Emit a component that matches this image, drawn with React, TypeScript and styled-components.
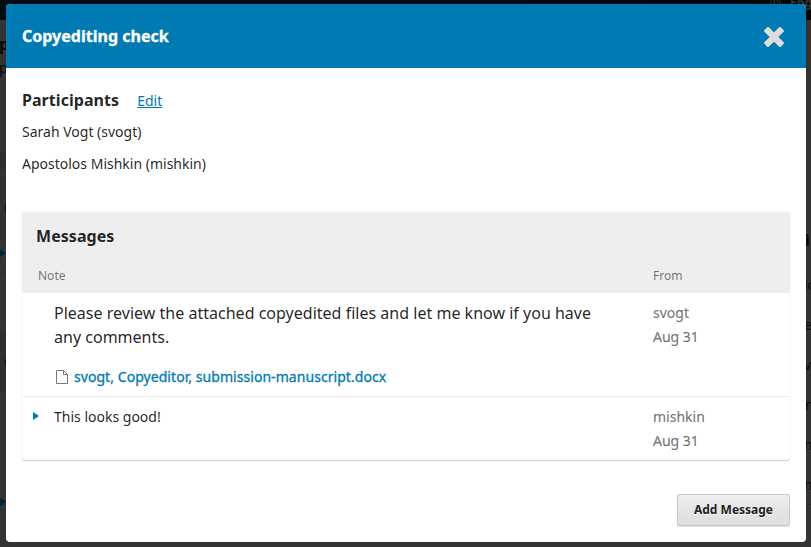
import React from "react";
import styled, { createGlobalStyle } from "styled-components";

const GlobalStyle = createGlobalStyle`
  * { box-sizing: border-box; }
  body { margin: 0; overflow: hidden; background: #333; }
  h2, h3, p, ul { margin: 0; padding: 0; }
  button { font-family: inherit; }
`;

const Page = styled.div`
  position: relative;
  width: 811px;
  height: 547px;
  overflow: hidden;
  background: #333;
  color: rgba(0, 0, 0, 0.87);
  font-family: "Noto Sans", sans-serif;
  font-size: 14px;
  line-height: 24px;
`;

const SiteBar = styled.div`
  display: flex;
  align-items: flex-start;
  justify-content: flex-end;
  height: 20px;
  background: linear-gradient(90deg, #000b12 0, #000b12 50%, #00060a 100%);
  color: #343434;
  font-size: 12px;
  font-weight: 700;
  line-height: 6px;
  white-space: nowrap;
  gap: 9px;
  overflow: hidden;
`;

const GlobeIcon = styled.svg`
  width: 11px;
  height: 11px;
  margin-top: -4px;
`;

const Language = styled.span`
  width: 21px;
`;

const SiteBody = styled.div`
  display: flex;
  justify-content: space-between;
  height: 527px;
`;

const Edge = styled.div`
  width: 6px;
  overflow: hidden;
`;

const Band = styled.div<{ $h: number; $bg?: string; $line?: boolean; $top?: number }>`
  display: flex;
  align-items: center;
  height: ${(p) => p.$h}px;
  padding-top: ${(p) => p.$top || 0}px;
  background: ${(p) => p.$bg || "#333"};
  border-bottom: ${(p) => (p.$line ? "1px solid #292929" : "0")};
`;

const Fragment = styled.span<{ $bold?: boolean; $size?: number; $shift?: number }>`
  margin-left: ${(p) => p.$shift || 0}px;
  color: #080808;
  font-size: ${(p) => p.$size || 14}px;
  font-weight: ${(p) => (p.$bold ? 700 : 400)};
`;

const EdgeArrow = styled.span`
  border-left: 6px solid #00253a;
  border-top: 4px solid transparent;
  border-bottom: 4px solid transparent;
`;

const Modal = styled.section`
  position: absolute;
  left: 6px;
  top: 4px;
  width: 800px;
  height: 538px;
  border-radius: 4px;
  overflow: hidden;
  background: #fff;
`;

const ModalHeader = styled.header`
  display: flex;
  align-items: center;
  justify-content: space-between;
  height: 64px;
  padding: 0 21px 0 16px;
  background: #007ab2;
  color: #fff;
`;

const Title = styled.h2`
  font-size: 16px;
  line-height: 24px;
  font-weight: 700;
  letter-spacing: 0.02px;
  -webkit-text-stroke: 0.3px #fff;
`;

const CloseButton = styled.button`
  display: flex;
  padding: 0;
  border: 0;
  background: none;
  svg { width: 22px; height: 22px; margin-top: 1px; }
`;

const ModalBody = styled.div`
  padding: 20px 16px 16px;
`;

const ParticipantsHead = styled.div`
  display: flex;
  align-items: baseline;
  gap: 18px;
  height: 24px;
`;

const SectionTitle = styled.h3`
  font-size: 16px;
  line-height: 24px;
  font-weight: 700;
  letter-spacing: 0.05px;
`;

const EditLink = styled.a`
  color: #007ab2;
  text-decoration: underline;
`;

const People = styled.ul`
  list-style: none;
  padding-top: 4px;
  li { height: 32px; line-height: 32px; }
`;

const Grid = styled.div`
  margin-top: 32px;
  height: 248px;
  border-radius: 3px;
  box-shadow: 0 0 1px rgba(0, 0, 0, 0.18), 0 1px 1px rgba(0, 0, 0, 0.18);
  overflow: hidden;
`;

const GridHeader = styled.div`
  height: 81px;
  padding: 12px 14px 0;
  background: #eee;
`;

const ColumnHeads = styled.div`
  display: grid;
  grid-template-columns: 615px 1fr;
  margin-top: 16px;
  padding-left: 2px;
  color: rgba(0, 0, 0, 0.54);
  font-size: 12px;
`;

const MessageRow = styled.div<{ $h: number; $divider?: boolean }>`
  display: grid;
  grid-template-columns: 32px 599px 1fr;
  height: ${(p) => p.$h}px;
  padding-top: 8px;
  border-bottom: ${(p) => (p.$divider ? "1px solid #eee" : "0")};
`;

const Expander = styled.span`
  margin: 7px 0 0 11px;
  width: 0;
  height: 0;
  border-left: 6px solid #007ab2;
  border-top: 4px solid transparent;
  border-bottom: 4px solid transparent;
`;

const Note = styled.p<{ $large?: boolean }>`
  width: 560px;
  font-size: ${(p) => (p.$large ? 16 : 14)}px;
  letter-spacing: ${(p) => (p.$large ? "0.014px" : "0")};
`;

const Sender = styled.div`
  color: rgba(0, 0, 0, 0.54);
  -webkit-text-stroke: 0.2px rgba(0, 0, 0, 0.54);
`;

const FileLink = styled.a`
  display: flex;
  align-items: center;
  gap: 6px;
  margin-top: 16px;
  padding-left: 2px;
  color: #007ab2;
  letter-spacing: 0.055px;
  -webkit-text-stroke: 0.3px #007ab2;
  white-space: nowrap;
`;

const FileIcon = styled.svg`
  width: 12px;
  height: 14px;
`;

const Footer = styled.footer`
  display: flex;
  justify-content: flex-end;
  padding-top: 34px;
`;

const AddButton = styled.button`
  width: 113px;
  height: 32px;
  padding: 0;
  border: 1px solid #c8c8c8;
  border-radius: 2px;
  background: linear-gradient(#eee, #dedede);
  box-shadow: 0 1px 1px rgba(0, 0, 0, 0.12);
  color: #222;
  font-size: 12px;
  font-weight: 700;
  line-height: 28px;
  text-shadow: 0 1px 0 #fff;
`;

function CloseIcon() {
  return (
    <svg viewBox="0 0 22 22" aria-hidden="true">
      <path
        d="M5 2.2 11 8.2 17 2.2 19.8 5 13.8 11 19.8 17 17 19.8 11 13.8 5 19.8 2.2 17 8.2 11 2.2 5Z"
        fill="#ddd"
        stroke="#ddd"
        strokeWidth="2.4"
        strokeLinejoin="round"
      />
    </svg>
  );
}

export default function App() {
  return (
    <Page>
      <GlobalStyle />
      <SiteBar>
        <GlobeIcon viewBox="0 0 11 11">
          <circle cx="5.5" cy="5.5" r="4.5" fill="none" stroke="#343434" />
          <path d="M3 4l2 1-1 3M7 4l1 3" stroke="#343434" fill="none" />
        </GlobeIcon>
        <Language>English</Language>
      </SiteBar>
      <SiteBody>
        <Edge>
          <Band $h={38} $top={10}><Fragment $bold $size={16} $shift={-1}>p</Fragment></Band>
          <Band $h={20}><Fragment $shift={-1}>p</Fragment></Band>
          <Band $h={74} />
          <Band $h={18} $bg="#2e2e2e" />
          <Band $h={7} />
          <Band $h={62} $bg="#303030"><Fragment $bold $shift={4}>E</Fragment></Band>
          <Band $h={28}><EdgeArrow /></Band>
          <Band $h={7} $line />
          <Band $h={59} />
          <Band $h={58} $bg="#2e2e2e"><Fragment $bold $size={16} $shift={4}>C</Fragment></Band>
          <Band $h={92} />
          <Band $h={38}><EdgeArrow /></Band>
        </Edge>
        <Edge>
          <Band $h={195} />
          <Band $h={50}><Fragment $bold $size={16}>i</Fragment></Band>
          <Band $h={40}><Fragment $shift={-1}>ic</Fragment></Band>
          <Band $h={40}><Fragment $shift={-1}>e</Fragment></Band>
          <Band $h={40}><Fragment $shift={-1}>v</Fragment></Band>
          <Band $h={40}><Fragment>r</Fragment></Band>
          <Band $h={40}><Fragment $shift={-1}>n</Fragment></Band>
          <Band $h={40} $line><Fragment $shift={-1}>n</Fragment></Band>
        </Edge>
      </SiteBody>
      <Modal>
        <ModalHeader>
          <Title>Copyediting check</Title>
          <CloseButton aria-label="Close"><CloseIcon /></CloseButton>
        </ModalHeader>
        <ModalBody>
          <ParticipantsHead>
            <SectionTitle>Participants</SectionTitle>
            <EditLink>Edit</EditLink>
          </ParticipantsHead>
          <People>
            <li>Sarah Vogt (svogt)</li>
            <li>Apostolos Mishkin (mishkin)</li>
          </People>
          <Grid>
            <GridHeader>
              <SectionTitle>Messages</SectionTitle>
              <ColumnHeads>
                <span>Note</span>
                <span>From</span>
              </ColumnHeads>
            </GridHeader>
            <MessageRow $h={104} $divider>
              <span />
              <div>
                <Note $large>Please review the attached copyedited files and let me know if you have any comments.</Note>
                <FileLink>
                  <FileIcon viewBox="0 0 12 14">
                    <path d="M.5.5h7l4 4v9H.5zM7.5.5v4h4" fill="none" stroke="#777" />
                  </FileIcon>
                  svogt, Copyeditor, submission-manuscript.docx
                </FileLink>
              </div>
              <Sender>svogt<br />Aug 31</Sender>
            </MessageRow>
            <MessageRow $h={64}>
              <Expander />
              <Note>This looks good!</Note>
              <Sender>mishkin<br />Aug 31</Sender>
            </MessageRow>
          </Grid>
          <Footer>
            <AddButton>Add Message</AddButton>
          </Footer>
        </ModalBody>
      </Modal>
    </Page>
  );
}
